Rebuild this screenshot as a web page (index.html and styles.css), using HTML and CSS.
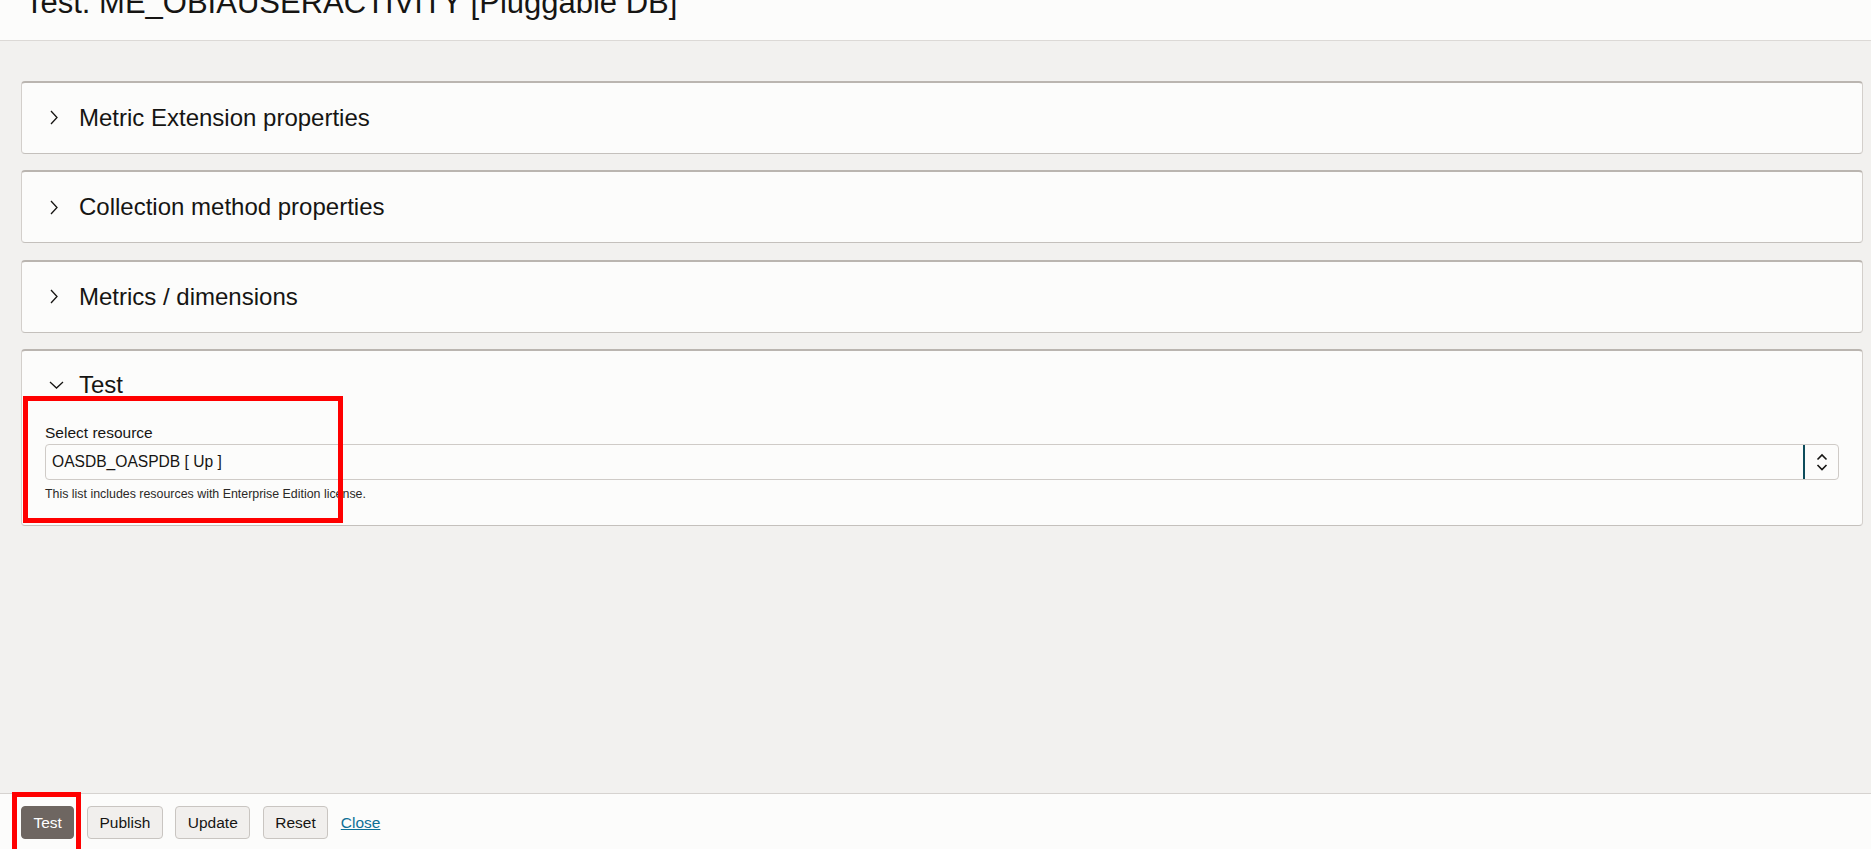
FILE: index.html
```html
<!DOCTYPE html>
<html lang="en">
<head>
<meta charset="utf-8">
<title>Test: ME_OBIAUSERACTIVITY [Pluggable DB]</title>
<link rel="stylesheet" href="styles.css">
</head>
<body>
<div class="page">
  <header class="page-header">
    <h1 class="page-title">Test: ME_OBIAUSERACTIVITY [Pluggable DB]</h1>
  </header>
  <main class="content">
    <section class="panel">
      <div class="panel-head">
        <svg class="chev-right" width="8" height="15" viewBox="0 0 8 15"><polyline points="1,1 7,7.5 1,14" fill="none" stroke="#161513" stroke-width="1.3"/></svg>
        <span class="panel-title">Metric Extension properties</span>
      </div>
    </section>
    <section class="panel">
      <div class="panel-head">
        <svg class="chev-right" width="8" height="15" viewBox="0 0 8 15"><polyline points="1,1 7,7.5 1,14" fill="none" stroke="#161513" stroke-width="1.3"/></svg>
        <span class="panel-title">Collection method properties</span>
      </div>
    </section>
    <section class="panel">
      <div class="panel-head">
        <svg class="chev-right" width="8" height="15" viewBox="0 0 8 15"><polyline points="1,1 7,7.5 1,14" fill="none" stroke="#161513" stroke-width="1.3"/></svg>
        <span class="panel-title">Metrics / dimensions</span>
      </div>
    </section>
    <section class="panel panel-open">
      <div class="panel-head panel-head-open">
        <svg class="chev-down" width="15" height="8" viewBox="0 0 15 8"><polyline points="1,1 7.5,7 14,1" fill="none" stroke="#161513" stroke-width="1.3"/></svg>
        <span class="panel-title">Test</span>
      </div>
      <div class="panel-body">
        <label class="field-label">Select resource</label>
        <div class="select">
          <span class="select-value">OASDB_OASPDB [ Up ]</span>
          <span class="select-btn">
            <svg width="12" height="18" viewBox="0 0 12 18"><path d="M1.5 6.5 L6 2 L10.5 6.5 M1.5 12 L6 16.5 L10.5 12" fill="none" stroke="#161513" stroke-width="1.6"/></svg>
          </span>
        </div>
        <p class="help">This list includes resources with Enterprise Edition license.</p>
      </div>
      <div class="mark mark-select"></div>
    </section>
  </main>
  <footer class="footer">
    <div class="btn-wrap">
      <button class="btn btn-primary">Test</button>
      <div class="mark mark-test"></div>
    </div>
    <button class="btn">Publish</button>
    <button class="btn">Update</button>
    <button class="btn">Reset</button>
    <a class="link" href="#">Close</a>
  </footer>
</div>
</body>
</html>
```
FILE: styles.css
```css
html, body {
  margin: 0;
  padding: 0;
}
body {
  background: #f2f1ef;
  font-family: "Liberation Sans", Arial, sans-serif;
  color: #161513;
  overflow: hidden;
}
.page {
  height: 849px;
  display: flex;
  flex-direction: column;
}
.page-header {
  height: 40px;
  flex: 0 0 40px;
  background: #fcfcfb;
  border-bottom: 1px solid #dcd9d6;
  overflow: hidden;
  padding-left: 25px;
}
.page-title {
  margin: -13px 0 0 0;
  font-size: 31px;
  line-height: 31px;
  font-weight: normal;
  white-space: nowrap;
}
.content {
  flex: 1;
  padding: 39.5px 8px 0 21px;
  display: flex;
  flex-direction: column;
  gap: 16.5px;
}
.panel {
  position: relative;
  background: #fcfcfb;
  border: 1px solid #d3cfcb;
  border-top: 2px solid #bab5b0;
  border-bottom-color: #c4c0bc;
  border-radius: 4px;
}
.panel-head {
  height: 70px;
  display: flex;
  align-items: center;
  padding-left: 28px;
}
.panel-head-open {
  height: 68px;
  padding-left: 27px;
}
.chev-right {
  margin-right: 21px;
  display: block;
}
.chev-down {
  margin-right: 15px;
  display: block;
}
.panel-title {
  font-size: 24px;
  line-height: 28px;
}
.panel-body {
  padding: 4px 23px 23px 23px;
}
.field-label {
  display: block;
  font-size: 15.5px;
  line-height: 20px;
  margin-bottom: 0.5px;
}
.select {
  display: flex;
  height: 34px;
  border: 1px solid #cfcbc7;
  border-radius: 4px;
  background: #fcfcfb;
}
.select-value {
  flex: 1;
  display: flex;
  align-items: center;
  padding-left: 6px;
  font-size: 15.6px;
}
.select-btn {
  width: 33px;
  border-left: 2px solid #0d4c5b;
  display: flex;
  align-items: center;
  justify-content: center;
}
.select-btn svg {
  display: block;
}
.help {
  margin: 6px 0 0 0;
  font-size: 12.4px;
  line-height: 16px;
  color: #2b2927;
}
.footer {
  flex: 0 0 43px;
  background: #fcfcfb;
  border-top: 1px solid #d6d3d0;
  padding: 12px 0 0 21px;
  display: flex;
  align-items: flex-start;
  gap: 12.5px;
}
.btn-wrap {
  position: relative;
}
.btn {
  height: 33px;
  padding: 0 11.5px;
  border: 1px solid #c9c5c1;
  border-radius: 4px;
  background: #f1efed;
  font-family: "Liberation Sans", Arial, sans-serif;
  font-size: 15.5px;
  color: #161513;
  display: block;
}
.btn-primary {
  background: #6e6661;
  border-color: #6e6661;
  color: #ffffff;
}
.link {
  font-size: 15.5px;
  line-height: 33px;
  color: #0e6f96;
  text-decoration: underline;
}
.mark {
  position: absolute;
  border: 5px solid #ff0000;
  pointer-events: none;
}
.mark-select {
  left: 0.5px;
  top: 45px;
  width: 310px;
  height: 117px;
}
.mark-test {
  left: -9px;
  top: -14px;
  width: 59px;
  height: 52px;
}
```
